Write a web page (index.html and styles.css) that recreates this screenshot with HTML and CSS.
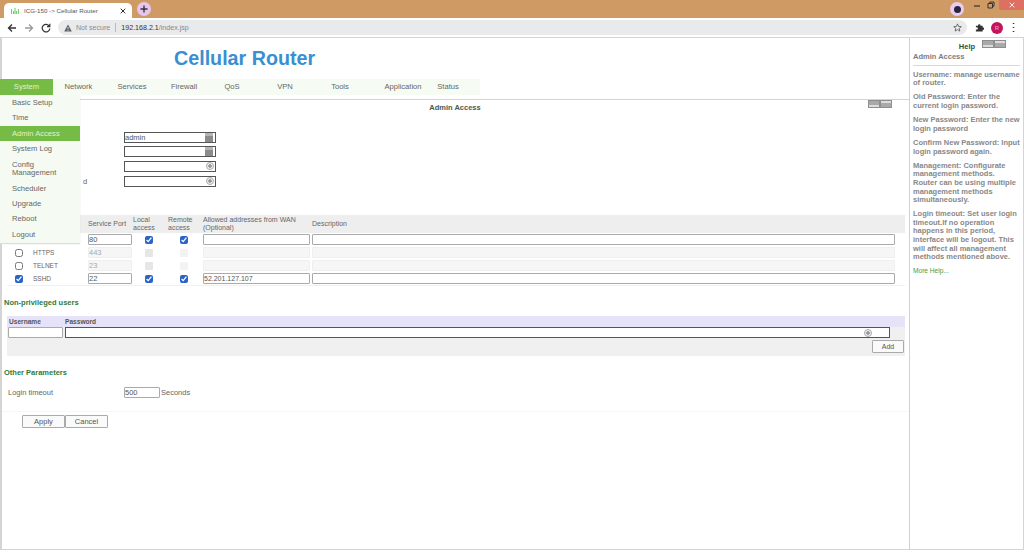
FILE: index.html
```html
<!DOCTYPE html>
<html lang="en">
<head>
<meta charset="utf-8">
<title>ICG-150 -> Cellular Router</title>
<link rel="stylesheet" href="styles.css">
</head>
<body>
<header class="tabstrip">
  <div class="tab">
    <svg class="favicon" viewBox="0 0 8 6" width="8" height="6"><path d="M0.5 6V1M2.5 6V3M4 6V0M5.5 6V3M7.5 6V1" stroke="#6fd36a" stroke-width="1.1"/></svg>
    <span class="tab-title">ICG-150 -&gt; Cellular Router</span>
    <svg class="tab-close" viewBox="0 0 6 6" width="6" height="6"><path d="M0.7 0.7L5.3 5.3M5.3 0.7L0.7 5.3" stroke="#333" stroke-width="1"/></svg>
  </div>
  <div class="newtab"><svg viewBox="0 0 8 8" width="8" height="8"><path d="M4 0.5V7.5M0.5 4H7.5" stroke="#3a3145" stroke-width="1.4"/></svg></div>
  <div class="winbtns">
    <div class="profile-dot"><span class="profile-inner"></span></div>
    <svg class="win-ic" viewBox="0 0 8 8" width="8" height="8"><path d="M1 5H7" stroke="#333" stroke-width="1.2"/></svg>
    <svg class="win-ic" viewBox="0 0 8 8" width="8" height="8"><path d="M1 2.5H5.5V7H1ZM2.8 2.5V1H7V5.2H5.5" fill="none" stroke="#333" stroke-width="1"/></svg>
    <div class="win-close"><svg viewBox="0 0 6 6" width="6" height="6"><path d="M0.7 0.7L5.3 5.3M5.3 0.7L0.7 5.3" stroke="#fff" stroke-width="0.9"/></svg></div>
  </div>
</header>
<div class="toolbar">
  <svg class="nav-ic" viewBox="0 0 10 10" width="10" height="10"><path d="M9 5H1.5M5 1.5L1.5 5L5 8.5" fill="none" stroke="#333" stroke-width="1.3"/></svg>
  <svg class="nav-ic" viewBox="0 0 10 10" width="10" height="10"><path d="M1 5H8.5M5 1.5L8.5 5L5 8.5" fill="none" stroke="#9a9a9a" stroke-width="1.3"/></svg>
  <svg class="nav-ic" viewBox="0 0 10 10" width="10" height="10"><path d="M8.3 3.2A3.8 3.8 0 1 0 8.8 5.5M8.8 0.8V3.6H6" fill="none" stroke="#333" stroke-width="1.2"/></svg>
  <div class="omnibox">
    <svg class="warn" viewBox="0 0 8 8" width="8" height="8"><path d="M4 0.5L7.8 7.5H0.2Z" fill="#5f6368"/><path d="M4 3V5.4M4 6V6.9" stroke="#e9eaec" stroke-width="0.8"/></svg>
    <span class="not-secure">Not secure</span>
    <span class="omni-sep"></span>
    <span class="url-host">192.168.2.1</span><span class="url-path">/index.jsp</span>
    <svg class="star" viewBox="0 0 10 10" width="9" height="9"><path d="M5 1L6.2 3.8L9.2 4.1L6.9 6L7.6 9L5 7.4L2.4 9L3.1 6L0.8 4.1L3.8 3.8Z" fill="none" stroke="#555" stroke-width="0.9"/></svg>
  </div>
  <svg class="puzzle" viewBox="0 0 10 10" width="9" height="9"><path d="M1 3H3.5A1.3 1.3 0 1 1 6 3H8.5V5A1.3 1.3 0 1 1 8.5 7.5V9.5H1V7A1.3 1.3 0 1 0 1 5Z" fill="#333"/></svg>
  <div class="avatar">R</div>
  <svg class="dots" viewBox="0 0 3 11" width="3" height="11"><path d="M1.5 1V1.9M1.5 5V5.9M1.5 9V9.9" stroke="#333" stroke-width="1.5"/></svg>
</div>

<div class="frame">
  <main class="main">
    <h1 class="brand">Cellular Router</h1>
    <nav class="menubar">
      <a class="menu-item m-sys is-active">System</a>
      <a class="menu-item m-net">Network</a>
      <a class="menu-item m-svc">Services</a>
      <a class="menu-item m-fw">Firewall</a>
      <a class="menu-item m-qos">QoS</a>
      <a class="menu-item m-vpn">VPN</a>
      <a class="menu-item m-tools">Tools</a>
      <a class="menu-item m-app">Application</a>
      <a class="menu-item m-status">Status</a>
    </nav>
    <ul class="dropdown">
      <li>Basic Setup</li>
      <li>Time</li>
      <li class="is-current">Admin Access</li>
      <li>System Log</li>
      <li class="two-line">Config Management</li>
      <li>Scheduler</li>
      <li>Upgrade</li>
      <li>Reboot</li>
      <li>Logout</li>
    </ul>

    <section class="panel">
      <div class="panel-head">
        <h2 class="panel-title">Admin Access</h2>
        <span class="collapse collapse-panel"><i class="c-min"></i><i class="c-max"></i></span>
      </div>

      <div class="form-row"><span class="form-label"></span><span class="field"><input class="txt dark" value="admin" aria-label="Username"><i class="key-ic"></i></span></div>
      <div class="form-row"><span class="form-label"></span><span class="field"><input class="txt dark" aria-label="Old Password"><i class="key-ic"></i></span></div>
      <div class="form-row"><span class="form-label"></span><span class="field"><input class="txt dark" aria-label="New Password"><i class="eye-ic"></i></span></div>
      <div class="form-row"><span class="form-label label-tail">d</span><span class="field"><input class="txt dark" aria-label="Confirm New Password"><i class="eye-ic"></i></span></div>

      <div class="section-gap"></div>
      <div class="mg-table">
        <div class="mg-row mg-header">
          <span></span><span></span><span>Service Port</span><span>Local<br>access</span><span>Remote<br>access</span><span>Allowed addresses from WAN<br>(Optional)</span><span>Description</span>
        </div>
        <div class="mg-row">
          <span><input type="checkbox" class="chk" checked></span><span class="svc-name"></span><span><input class="txt port" value="80"></span><span><input type="checkbox" class="chk" checked></span><span><input type="checkbox" class="chk" checked></span><span><input class="txt addr"></span><span><input class="txt desc"></span>
        </div>
        <div class="mg-row">
          <span><input type="checkbox" class="chk"></span><span class="svc-name">HTTPS</span><span><input class="txt port off" value="443" disabled></span><span><input type="checkbox" class="chk" disabled></span><span><input type="checkbox" class="chk faint" disabled></span><span><input class="txt addr off" disabled></span><span><input class="txt desc off" disabled></span>
        </div>
        <div class="mg-row">
          <span><input type="checkbox" class="chk"></span><span class="svc-name">TELNET</span><span><input class="txt port off" value="23" disabled></span><span><input type="checkbox" class="chk" disabled></span><span><input type="checkbox" class="chk faint" disabled></span><span><input class="txt addr off" disabled></span><span><input class="txt desc off" disabled></span>
        </div>
        <div class="mg-row">
          <span><input type="checkbox" class="chk" checked></span><span class="svc-name">SSHD</span><span><input class="txt port" value="22"></span><span><input type="checkbox" class="chk" checked></span><span><input type="checkbox" class="chk" checked></span><span><input class="txt addr" value="52.201.127.107"></span><span><input class="txt desc"></span>
        </div>
      </div>

      <h3 class="section">Non-privileged users</h3>
      <div class="np-table">
        <div class="np-header"><span>Username</span><span>Password</span></div>
        <div class="np-body">
          <div class="np-inputs">
            <input class="txt np-user">
            <span class="field np-pass-wrap"><input class="txt dark np-pass"><i class="eye-ic eye-np"></i></span>
          </div>
          <div class="np-actions"><button class="btn btn-add">Add</button></div>
        </div>
      </div>

      <h3 class="section">Other Parameters</h3>
      <div class="timeout-row">
        <label class="form-label">Login timeout</label>
        <input class="txt timeout" value="500"><span class="unit">Seconds</span>
      </div>
      <div class="actions">
        <button class="btn btn-main">Apply</button><button class="btn btn-main">Cancel</button>
      </div>
    </section>
  </main>

  <aside class="help">
    <div class="help-head">
      <span class="help-title">Help</span>
      <span class="collapse collapse-help"><i class="c-min"></i><i class="c-max"></i></span>
    </div>
    <div class="help-sub">Admin Access</div>
    <p>Username: manage username of router.</p>
    <p>Old Password: Enter the current login password.</p>
    <p>New Password: Enter the new login password</p>
    <p>Confirm New Password: Input login password again.</p>
    <p>Management: Configurate management methods.<br>Router can be using multiple management methods simultaneously.</p>
    <p>Login timeout: Set user login timeout.If no operation happens in this period, interface will be logout. This will affect all management methods mentioned above.</p>
    <a class="more-help">More Help...</a>
  </aside>
</div>
</body>
</html>
```

FILE: styles.css
```css
* { box-sizing: border-box; }
html, body { margin: 0; padding: 0; }
body {
  width: 1024px;
  height: 555px;
  overflow: hidden;
  background: #fff;
  font-family: "Liberation Sans", Arial, sans-serif;
  font-size: 7.5px;
  color: #555;
}

/* Browser chrome */
.tabstrip {
  height: 18px;
  background: #cf9a64;
  display: flex;
  align-items: flex-end;
  padding-left: 4px;
}
.tab {
  width: 128px;
  height: 15px;
  background: #fff;
  border-radius: 5px 5px 0 0;
  display: flex;
  align-items: center;
  padding: 0 6px 0 7px;
}
.favicon { margin-right: 5px; }
.tab-title { flex: 1; font-size: 6.2px; color: #555; white-space: nowrap; }
.newtab {
  width: 14px;
  height: 14px;
  border-radius: 50%;
  background: #e6c6ec;
  margin: 0 0 2px 5px;
  display: flex;
  align-items: center;
  justify-content: center;
}
.winbtns {
  margin-left: auto;
  align-self: flex-start;
  display: flex;
  align-items: flex-start;
}
.profile-dot {
  width: 14px;
  height: 14px;
  border-radius: 50%;
  background: #e8cdf0;
  margin: 2px 9px 0 0;
  display: flex;
  align-items: center;
  justify-content: center;
}
.profile-inner { width: 7px; height: 7px; border-radius: 50%; background: #2b2440; }
.win-ic { margin: 1px 6px 0 0; }
.win-ic:last-of-type { margin-right: 4px; }
.win-close {
  width: 25px;
  height: 10px;
  background: #dd6f63;
  border-radius: 0 0 0 2px;
  display: flex;
  align-items: center;
  justify-content: center;
}
.toolbar {
  height: 19px;
  background: #fff;
  display: flex;
  align-items: center;
  padding-left: 7px;
}
.nav-ic { margin-right: 7px; }
.omnibox {
  width: 909px;
  height: 15px;
  background: #e9eaec;
  border-radius: 8px;
  display: flex;
  align-items: center;
  padding: 0 5px 0 6px;
  font-size: 7.1px;
}
.warn { margin-right: 4px; }
.not-secure { color: #8a8d90; }
.omni-sep { width: 1px; height: 9px; background: #b8b9bb; margin: 0 5px; }
.url-host { color: #333; }
.url-path { color: #85888b; }
.star { margin-left: auto; }
.puzzle { margin-left: 8px; }
.avatar {
  width: 12px;
  height: 12px;
  border-radius: 50%;
  background: #c4145c;
  color: #f3a8c8;
  font-size: 6px;
  line-height: 12px;
  text-align: center;
  margin-left: 7px;
}
.dots { margin-left: 9px; }

/* Page frame */
.frame {
  height: 513px;
  display: flex;
  border-top: 1px solid #d4d4d4;
  border-left: 2px solid #d4d4d4;
  border-right: 1px solid #d4d4d4;
  border-bottom: 1px solid #d4d4d4;
}
.main {
  width: 907px;
  position: relative;
  margin-left: 0;
}
.brand {
  height: 41px;
  margin: 0;
  padding: 8px 0 0 172px;
  font-size: 19.7px;
  line-height: 24px;
  font-weight: bold;
  color: #3a8fd2;
  white-space: nowrap;
}
.menubar {
  width: 480px;
  height: 16px;
  margin-left: -2px;
  display: flex;
  background: #f6fbf3;
}
.menu-item {
  font-size: 7.6px;
  line-height: 16px;
  text-align: center;
  color: #666;
}
.is-active { background: #76bb46; color: #dff3cf; }
.m-sys { width: 53px; }
.m-net { width: 51px; }
.m-svc { width: 56px; }
.m-fw { width: 48px; }
.m-qos { width: 48px; }
.m-vpn { width: 58px; }
.m-tools { width: 52px; }
.m-app { width: 46px; margin-left: 14px; }
.m-status { width: 44px; }

.dropdown {
  position: absolute;
  z-index: 5;
  left: -2px;
  top: 57px;
  width: 80px;
  height: 148px;
  margin: 0;
  padding: 0;
  list-style: none;
  background: #f5fbf2;
  box-shadow: 0 1px 1px #ddd;
}
.dropdown li {
  height: 15.4px;
  line-height: 15.4px;
  padding-left: 12px;
  font-size: 7.6px;
  color: #666;
}
.dropdown li.is-current { background: #76bb46; color: #dff3cf; }
.dropdown li.two-line { height: 24px; line-height: 8.5px; padding: 4px 16px 0 12px; }

/* Panel */
.panel { margin-top: 4px; }
.panel-head {
  position: relative;
  height: 31px;
  border-top: 1px solid #d4d4d4;
  margin-left: -2px;
}
.panel-title {
  margin: 0;
  padding-top: 3px;
  padding-left: 1px;
  text-align: center;
  font-size: 7.5px;
  line-height: 9px;
  font-weight: bold;
  color: #4a5a4a;
}
.collapse {
  position: absolute;
  display: flex;
  width: 24px;
  height: 8px;
}
.collapse i { flex: 1; background: #a9a9a9; border: 1px solid #8e8e8e; }
.collapse .c-min { box-shadow: inset 0 -2px 0 #dcdcdc; }
.collapse .c-max { box-shadow: inset 0 2px 0 #dcdcdc; }
.collapse-panel { right: 17px; top: 0; }
.collapse-help { left: 69px; top: -3px; }

.form-row {
  height: 14.6px;
  display: flex;
  align-items: center;
}
.form-label {
  width: 122px;
  padding-left: 6px;
  font-size: 7.5px;
  color: #666;
  white-space: nowrap;
  flex: none;
}
.label-tail { padding-left: 81px; }
.field { position: relative; display: inline-block; }
.txt {
  display: block;
  height: 11px;
  padding: 0 1px 0 0;
  border: 1px solid #aaa;
  border-radius: 1px;
  background: #fff;
  font-family: "Liberation Sans", Arial, sans-serif;
  font-size: 7.5px;
  color: #555;
  outline: 0;
}
.txt.dark { width: 92px; border-color: #555; border-radius: 0; }
.txt.off { background: #f6f6f6; border-color: #efefef; color: #aaa; }
.key-ic, .eye-ic {
  position: absolute;
  top: 1px;
  right: 3px;
  width: 8px;
  height: 9px;
}
.key-ic { background: #8b8b8b; box-shadow: inset 0 3px 0 #b5b5b5; }
.eye-ic {
  right: 2px;
  width: 8px;
  height: 8px;
  top: 1.5px;
  border: 1px solid #aaa;
  border-radius: 50%;
  background: radial-gradient(circle, #999 0 1.5px, #eee 2px);
}

.section-gap { height: 27px; }
.section {
  height: 14px;
  margin: 10px 0 6px 2px;
  font-size: 7.5px;
  line-height: 14px;
  font-weight: bold;
  color: #2f7a3a;
}

/* Management table */
.mg-table {
  margin-left: 5px;
  width: 898px;
  border-bottom: 1px solid #f0f0f0;
}
.mg-row {
  display: grid;
  grid-template-columns: 26px 55px 45px 35px 35px 109px 593px;
  height: 13px;
  align-items: center;
}
.mg-header {
  height: 18px;
  background: #eeeeee;
  font-size: 7px;
  line-height: 8px;
  color: #666;
}
.mg-row > span:first-child { padding-left: 8px; }
.svc-name { font-size: 6.5px; color: #666; }
.chk {
  display: block;
  width: 8px;
  height: 8px;
  margin: 0;
  accent-color: #2a63c9;
}
.chk:disabled {
  appearance: none;
  background: #e6e6e6;
  border: 0;
  border-radius: 1px;
}
.chk.faint:disabled { background: #f3f3f3; }
.mg-row > span:nth-child(4) .chk,
.mg-row > span:nth-child(5) .chk { margin-left: 12px; }
.port { width: 44px; }
.addr { width: 107px; font-size: 7px; }
.txt.desc { width: 583px; }

/* Non-privileged */
.np-table { margin-left: 5px; width: 898px; }
.np-header {
  height: 11px;
  padding-left: 2px;
  background: #e6e2f8;
  display: flex;
  font-size: 6.6px;
  line-height: 11px;
  font-weight: bold;
  color: #555;
}
.np-header span:first-child { width: 56px; }
.np-body { height: 29px; background: #f0f0f0; }
.np-inputs { display: flex; padding-left: 1px; }
.np-user { width: 55px; }
.np-pass-wrap { margin-left: 2px; }
.txt.np-pass { width: 825px; }
.eye-np { right: 18px; }
.np-actions { display: flex; justify-content: flex-end; padding: 2px 1px 0 0; }
.btn {
  padding: 0;
  background: #fafafa;
  border: 1px solid #aaa;
  border-radius: 1px;
  font-family: "Liberation Sans", Arial, sans-serif;
  font-size: 7px;
  color: #555;
}
.btn-add { width: 32px; height: 13px; }

/* Other parameters */
.timeout-row {
  display: flex;
  align-items: center;
  height: 11px;
  margin-top: 7px;
}
.txt.timeout { width: 36px; }
.unit { font-size: 7.5px; color: #666; margin-left: 1px; }
.actions {
  margin-top: 13px;
  border-top: 1px solid #f7f7f7;
  padding: 3px 0 0 20px;
  display: flex;
}
.btn-main { width: 43px; height: 13px; font-size: 7.5px; }

/* Help */
.help {
  width: 114px;
  border-left: 1px solid #d0d0d0;
  padding: 5px 2px 0 3px;
  font-size: 7.5px;
  line-height: 8.6px;
  font-weight: bold;
  color: #888;
}
.help-head { position: relative; height: 8px; text-align: center; }
.help-title { color: #2f4f3a; font-size: 7.5px; line-height: 8px; position: relative; left: 0; }
.help-sub {
  margin: 2px 1px 0 0;
  padding-bottom: 3px;
  border-bottom: 1px solid #d8d8d8;
  color: #7d7d7d;
}
.help p { margin: 5px 0 0; }
.help p + p { margin-top: 5.6px; }
.more-help { display: block; margin-top: 5px; font-weight: normal; font-size: 6.6px; color: #3f9a4a; }
```
